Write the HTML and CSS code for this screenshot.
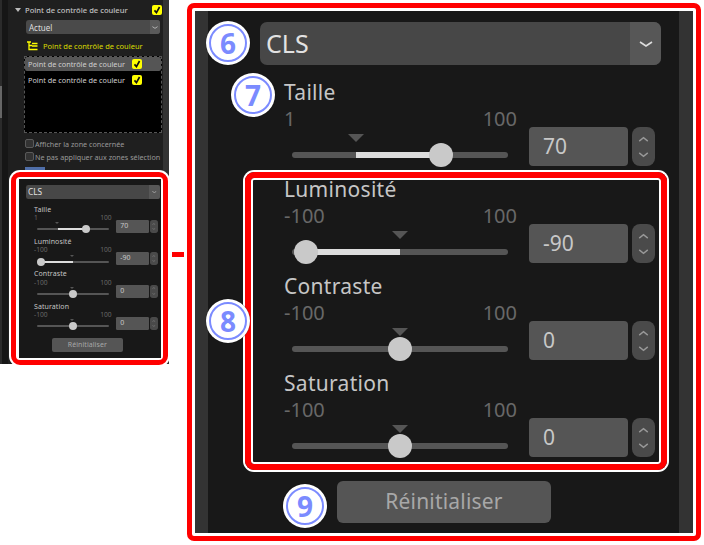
FILE: index.html
```html
<!DOCTYPE html>
<html lang="fr">
<head>
<meta charset="utf-8">
<title>Point de contrôle de couleur</title>
<link rel="stylesheet" href="styles.css">
</head>
<body>
<svg class="defs" width="0" height="0" aria-hidden="true">
  <symbol id="down" viewBox="0 0 14 6"><path d="M1 1l6 4 6-4" fill="none" stroke="#ddd" stroke-width="1.6"/></symbol>
  <symbol id="up" viewBox="0 0 12 7"><path d="M1 6l5-4 5 4" fill="none" stroke="#999" stroke-width="1.6"/></symbol>
  <symbol id="dn" viewBox="0 0 12 7"><path d="M1 1l5 4 5-4" fill="none" stroke="#999" stroke-width="1.6"/></symbol>
  <symbol id="chk" viewBox="0 0 9 9"><path d="M2.2 4.8l1.8 2 2.8-5" fill="none" stroke="#111" stroke-width="1.5"/></symbol>
</svg>
<main class="figure">
  <aside class="sidebar">
    <i class="scroll-thumb"></i>
    <div class="side-title">
      <i class="tri"></i>
      <span class="side-title-text">Point de contrôle de couleur</span>
      <span class="ybox"><svg class="ycheck"><use href="#chk"/></svg></span>
    </div>
    <div class="side-select"><span class="side-select-text">Actuel</span><span class="side-select-arrow"><svg class="side-chev"><use href="#down"/></svg></span></div>
    <div class="tool-row">
      <svg class="tool-icon" viewBox="0 0 11 10"><path d="M0 1h4M2 1v7.500h3M2 4.500h3M5 2.500h5.500M5 5h5.500M5 8.500h5.500" fill="none" stroke="#ff0" stroke-width="1.300"/></svg>
      <span>Point de contrôle de couleur</span>
    </div>
    <div class="list">
      <div class="list-row selected"><span class="list-text">Point de contrôle de couleur</span><span class="ybox"><svg class="ycheck"><use href="#chk"/></svg></span></div>
      <div class="list-row"><span class="list-text">Point de contrôle de couleur</span><span class="ybox"><svg class="ycheck"><use href="#chk"/></svg></span></div>
    </div>
    <div class="check-row first"><i class="gbox"></i><span>Afficher la zone concernée</span></div>
    <div class="check-row"><i class="gbox"></i><span>Ne pas appliquer aux zones sélection</span></div>
    <i class="blue-stub"></i>

    <section class="frame-small">
      <div class="panel-small">
        <div class="cls cls-small">
          <div class="select"><span class="select-text">CLS</span><span class="select-arrow"><svg class="chev"><use href="#down"/></svg></span></div>
          <div class="ctl">
            <div class="ctl-label">Taille</div>
            <div class="ctl-body">
              <div class="ctl-left">
                <div class="range"><span>1</span><span>100</span></div>
                <div class="track"><i class="fill" style="left:29.6%;width:39.4%"></i><i class="mark" style="left:29.6%"></i><i class="thumb" style="left:69%"></i></div>
              </div>
              <div class="input">70</div>
              <div class="spin"><svg class="sp"><use href="#up"/></svg><svg class="sp"><use href="#dn"/></svg></div>
            </div>
          </div>
          <div class="ctl">
            <div class="ctl-label">Luminosité</div>
            <div class="ctl-body">
              <div class="ctl-left">
                <div class="range"><span>-100</span><span>100</span></div>
                <div class="track"><i class="fill" style="left:6.5%;width:43.5%"></i><i class="mark" style="left:50%"></i><i class="thumb" style="left:6.5%"></i></div>
              </div>
              <div class="input">-90</div>
              <div class="spin"><svg class="sp"><use href="#up"/></svg><svg class="sp"><use href="#dn"/></svg></div>
            </div>
          </div>
          <div class="ctl">
            <div class="ctl-label">Contraste</div>
            <div class="ctl-body">
              <div class="ctl-left">
                <div class="range"><span>-100</span><span>100</span></div>
                <div class="track"><i class="mark" style="left:50%"></i><i class="thumb" style="left:50%"></i></div>
              </div>
              <div class="input">0</div>
              <div class="spin"><svg class="sp"><use href="#up"/></svg><svg class="sp"><use href="#dn"/></svg></div>
            </div>
          </div>
          <div class="ctl">
            <div class="ctl-label">Saturation</div>
            <div class="ctl-body">
              <div class="ctl-left">
                <div class="range"><span>-100</span><span>100</span></div>
                <div class="track"><i class="mark" style="left:50%"></i><i class="thumb" style="left:50%"></i></div>
              </div>
              <div class="input">0</div>
              <div class="spin"><svg class="sp"><use href="#up"/></svg><svg class="sp"><use href="#dn"/></svg></div>
            </div>
          </div>
          <div class="reset">Réinitialiser</div>
        </div>
      </div>
    </section>
  </aside>

  <i class="connector"></i>

  <section class="frame-big">
    <div class="panel-big">
      <div class="cls">
        <div class="select"><span class="select-text">CLS</span><span class="select-arrow"><svg class="chev"><use href="#down"/></svg></span></div>
        <div class="ctl">
          <div class="ctl-label">Taille</div>
          <div class="ctl-body">
            <div class="ctl-left">
              <div class="range"><span>1</span><span>100</span></div>
              <div class="track"><i class="fill" style="left:29.6%;width:39.4%"></i><i class="mark" style="left:29.6%"></i><i class="thumb" style="left:69%"></i></div>
            </div>
            <div class="input">70</div>
            <div class="spin"><svg class="sp"><use href="#up"/></svg><svg class="sp"><use href="#dn"/></svg></div>
          </div>
        </div>
        <div class="ctl">
          <div class="ctl-label">Luminosité</div>
          <div class="ctl-body">
            <div class="ctl-left">
              <div class="range"><span>-100</span><span>100</span></div>
              <div class="track"><i class="fill" style="left:6.5%;width:43.5%"></i><i class="mark" style="left:50%"></i><i class="thumb" style="left:6.5%"></i></div>
            </div>
            <div class="input">-90</div>
            <div class="spin"><svg class="sp"><use href="#up"/></svg><svg class="sp"><use href="#dn"/></svg></div>
          </div>
        </div>
        <div class="ctl">
          <div class="ctl-label">Contraste</div>
          <div class="ctl-body">
            <div class="ctl-left">
              <div class="range"><span>-100</span><span>100</span></div>
              <div class="track"><i class="mark" style="left:50%"></i><i class="thumb" style="left:50%"></i></div>
            </div>
            <div class="input">0</div>
            <div class="spin"><svg class="sp"><use href="#up"/></svg><svg class="sp"><use href="#dn"/></svg></div>
          </div>
        </div>
        <div class="ctl">
          <div class="ctl-label">Saturation</div>
          <div class="ctl-body">
            <div class="ctl-left">
              <div class="range"><span>-100</span><span>100</span></div>
              <div class="track"><i class="mark" style="left:50%"></i><i class="thumb" style="left:50%"></i></div>
            </div>
            <div class="input">0</div>
            <div class="spin"><svg class="sp"><use href="#up"/></svg><svg class="sp"><use href="#dn"/></svg></div>
          </div>
        </div>
        <div class="reset">Réinitialiser</div>
      </div>
    </div>
    <div class="zone"></div>
    <div class="badge b6"><span>6</span></div>
    <div class="badge b7"><span>7</span></div>
    <div class="badge b8"><span>8</span></div>
    <div class="badge b9"><span>9</span></div>
  </section>
</main>
</body>
</html>
```
FILE: styles.css
```css
* { box-sizing: border-box; }
html, body { margin: 0; padding: 0; background: #fff; }
body { width: 704px; height: 545px; overflow: hidden; font-family: "Noto Sans", "Open Sans", sans-serif; }
i { display: block; }
.defs { position: absolute; }

.figure { display: flex; align-items: flex-start; width: 704px; height: 545px; }

/* Left sidebar */
.sidebar { position: relative; flex: none; width: 169px; height: 364px; padding-top: 5px; background: #1f1f1f; border-left: 2px solid #2b2b2b; font-size: 7.5px; color: #c0c0c0; box-shadow: inset 6px 0 0 #161616, inset -6px 0 0 #333; }
.scroll-thumb { position: absolute; left: -2px; top: 86px; width: 2px; height: 32px; background: #666; }
.side-title { display: flex; align-items: center; height: 9px; margin-left: 13px; }
.tri { width: 0; height: 0; border-left: 3px solid transparent; border-right: 3px solid transparent; border-top: 4px solid #bbb; }
.side-title-text { margin-left: 4px; width: 127px; font-size: 7.6px; font-weight: 500; white-space: nowrap; }
.ybox { display: flex; flex: none; width: 10px; height: 10px; border-radius: 2px; background: #ff0; }
.ycheck { width: 10px; height: 10px; }
.side-select { display: flex; align-items: center; justify-content: space-between; width: 134px; height: 14px; margin: 6px 0 0 24px; border-radius: 3px; background: #4a4a4a; color: #ddd; }
.side-select-text { margin-left: 3px; font-size: 8px; }
.side-select-arrow { display: flex; align-items: center; justify-content: center; width: 10px; height: 14px; border-radius: 0 3px 3px 0; background: #5a5a5a; }
.side-chev { width: 6px; height: 3px; }
.tool-row { display: flex; align-items: center; height: 10px; margin: 7px 0 0 25px; color: #dcdc00; white-space: nowrap; }
.tool-icon { width: 11px; height: 10px; margin-right: 5px; flex: none; }
.list { width: 138px; height: 77px; margin: 5px 0 0 22px; background: #000; border: 1px dashed #555; }
.list-row { display: flex; align-items: center; height: 15px; padding-left: 3px; }
.list-row.selected { height: 14px; margin-bottom: 1px; background: #555; border-radius: 2px; }
.list-text { width: 104px; overflow: hidden; white-space: nowrap; font-size: 7.3px; color: #d0d0d0; }
.check-row { display: flex; align-items: center; height: 9px; margin: 4px 0 0 23px; white-space: nowrap; color: #999; font-size: 7.2px; }
.check-row.first { margin-top: 6px; }
.gbox { flex: none; width: 9px; height: 9px; margin-right: 1px; border-radius: 2px; background: #333; border: 1px solid #5a5a5a; }
.blue-stub { width: 20px; height: 5px; margin: 6px 0 0 23px; background: #4f6ea8; }

/* Small callout */
.frame-small { width: 157px; height: 193px; margin-left: 9px; padding: 2px 2px 2px 3px; background: #fff; border: 5px solid #f00; border-radius: 9px; box-shadow: 0 0 0 2px #fff; position: relative; }
.panel-small { width: 142px; height: 179px; padding: 6px 0 0 7px; background: #181818; overflow: hidden; }
.cls-small { zoom: 0.3333; }
.cls-small .ctl-label { padding-top: 5px; }
.cls-small .range { padding-top: 3px; }

/* Connector */
.connector { flex: none; width: 12px; height: 5px; margin: 252px 0 0 3px; background: #f00; }

/* Big callout */
.frame-big { position: relative; flex: none; width: 514px; height: 538px; margin: 3px 0 0 3px; padding: 3px; background: #fff; border: 5px solid #f00; border-radius: 7px; }
.panel-big { width: 498px; height: 522px; padding: 11px 0 0 65px; background: #181818; box-shadow: inset 13px 0 0 #333, inset -14px 0 0 #333; }

/* Shared CLS control set */
.cls { width: 401px; font-family: "Noto Sans", "Open Sans", sans-serif; }
.select { display: flex; justify-content: space-between; height: 43px; margin-bottom: 14px; border-radius: 7px; background: #474747; overflow: hidden; }
.select-text { margin-left: 6px; font-size: 25px; line-height: 42px; color: #e2e2e2; }
.select-arrow { display: flex; align-items: center; justify-content: center; width: 31px; background: #575757; }
.chev { width: 14px; height: 6px; }
.ctl { height: 97px; padding-left: 24px; }
.ctl-label { height: 26px; font-size: 21px; line-height: 26px; color: #c6c6c6; letter-spacing: 0.3px; }
.ctl-body { display: flex; align-items: flex-end; margin-top: 4px; }
.ctl-left { width: 233px; height: 57px; margin-right: 12px; }
.range { display: flex; justify-content: space-between; height: 20px; font-size: 20px; line-height: 20px; color: #686868; }
.track { position: relative; width: 216px; height: 6px; margin: 23px 0 0 8px; border-radius: 3px; background: #555; }
.fill { position: absolute; top: 0; height: 6px; background: #dcdcdc; }
.mark { position: absolute; top: -18px; width: 0; height: 0; margin-left: -8px; border-left: 8px solid transparent; border-right: 8px solid transparent; border-top: 8px solid #555; }
.thumb { position: absolute; top: -9px; width: 24px; height: 24px; margin-left: -12px; border-radius: 50%; background: #c9c9c9; }
.input { width: 99px; height: 39px; padding-left: 14px; border-radius: 4px; background: #555; font-size: 21px; line-height: 38px; color: #c8c8c8; }
.spin { display: flex; flex-direction: column; align-items: center; justify-content: center; gap: 10px; width: 23px; height: 39px; margin-left: 4px; border-radius: 8px; background: #4a4a4a; }
.sp { width: 11px; height: 6px; }
.reset { width: 214px; height: 42px; margin: 14px 0 0 77px; border-radius: 6px; background: #555; font-size: 21px; line-height: 40px; text-align: center; color: #a8a8a8; letter-spacing: 0.2px; }

/* Highlighted zone */
.zone { position: absolute; left: 53px; top: 164px; width: 422px; height: 298px; border: 6px solid #f00; border-radius: 9px; box-shadow: 0 0 0 2px #fff, inset 0 0 0 2px #fff; }

/* Numbered badges */
.badge { position: absolute; display: flex; align-items: center; justify-content: center; width: 44px; height: 44px; border-radius: 50%; background: #fff; box-shadow: 0 0 1px rgba(0,0,0,.8); }
.badge span { display: flex; align-items: center; justify-content: center; width: 38px; height: 38px; border: 2px solid #7b8bff; border-radius: 50%; font-size: 28px; font-weight: 700; line-height: 1; color: #7b8bff; }
.b6 { left: 14px; top: 13px; }
.b7 { left: 39px; top: 65px; }
.b8 { left: 14px; top: 291px; }
.b9 { left: 91px; top: 476px; }
```
